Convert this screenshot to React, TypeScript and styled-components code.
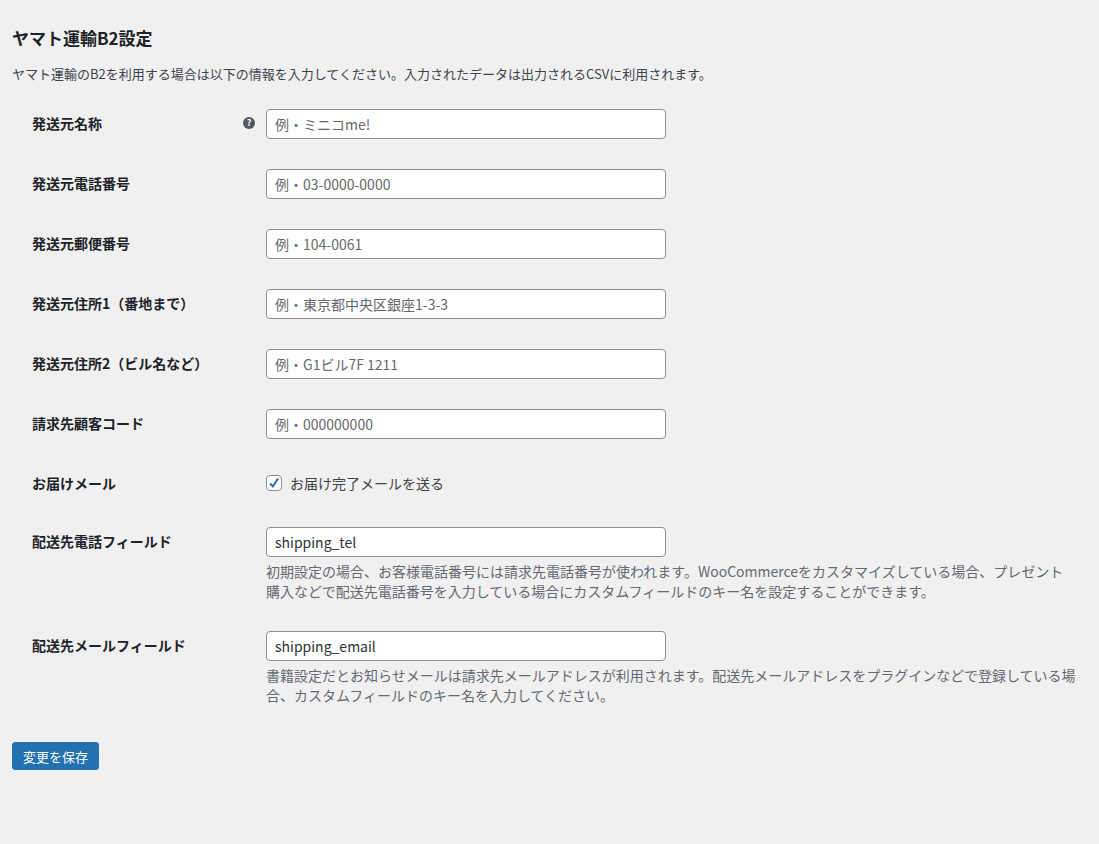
import React from "react";
import styled, { createGlobalStyle } from "styled-components";

const Global = createGlobalStyle`
  html, body { margin: 0; padding: 0; background: #f0f0f1; }
  body { font-family: "Noto Sans CJK JP", "Noto Sans", sans-serif; color: #1d2327; font-size: 13px; }
`;

const Page = styled.div`
  padding: 24px 12px 60px 12px;
  min-height: 844px;
  box-sizing: border-box;
`;
const Title = styled.h2`
  font-size: 17px; font-weight: 700; margin: 0 0 12px 0; line-height: 28px;
`;
const Intro = styled.p`
  margin: 0 0 10px 0; font-size: 13px; line-height: 20px; color: #3c434a;
`;
const Row = styled.div`
  display: flex; padding: 15px 0;
`;
const Label = styled.div`
  width: 234px; padding-left: 20px; font-size: 14px; font-weight: 700;
  line-height: 20px; padding-top: 4px; display: flex; justify-content: space-between; align-items: center; align-self: flex-start;
`;
const Help = styled.span`
  width: 12px; height: 12px; border-radius: 50%; background: #50575e; color: #fff;
  font-size: 9px; font-weight: 700; line-height: 12px; text-align: center; margin-right: 11px;
`;
const Field = styled.div`
  flex: 1; padding-right: 10px;
`;
const Input = styled.input`
  box-sizing: border-box; width: 400px; height: 30px; border: 1px solid #8c8f94; border-radius: 4px;
  background: #fff; padding: 0 8px; font-size: 14px; font-family: inherit; color: #2c3338;
  &::placeholder { color: #646970; }
`;
const Desc = styled.p`
  margin: 4px 0 0 0; font-size: 14px; line-height: 20px; color: #646970;
`;
const CheckLine = styled.label`
  display: flex; align-items: center; gap: 8px; height: 28px; font-size: 14px; color: #3c434a;
`;
const Box = styled.span`
  width: 16px; height: 16px; box-sizing: border-box; border: 1px solid #8c8f94; border-radius: 4px; background: #fff;
  display: flex; align-items: center; justify-content: center;
`;
const Button = styled.button`
  margin-top: 22px; height: 28px; padding: 0 10px; background: #2271b1; color: #fff; border: 1px solid #2271b1;
  border-radius: 3px; font-size: 13px; font-family: inherit;
`;

const fields = [
  ["発送元名称", "例・ミニコme!", true],
  ["発送元電話番号", "例・03-0000-0000"],
  ["発送元郵便番号", "例・104-0061"],
  ["発送元住所1（番地まで）", "例・東京都中央区銀座1-3-3"],
  ["発送元住所2（ビル名など）", "例・G1ビル7F 1211"],
  ["請求先顧客コード", "例・000000000"],
] as const;

export default function App() {
  return (
    <Page>
      <Global />
      <Title>ヤマト運輸B2設定</Title>
      <Intro>ヤマト運輸のB2を利用する場合は以下の情報を入力してください。入力されたデータは出力されるCSVに利用されます。</Intro>
      {fields.map((f) => (
        <Row key={f[0]}>
          <Label>{f[0]}{f[2] ? <Help>?</Help> : null}</Label>
          <Field><Input placeholder={f[1]} /></Field>
        </Row>
      ))}
      <Row>
        <Label>お届けメール</Label>
        <Field>
          <CheckLine>
            <Box>
              <svg width="14" height="14" viewBox="0 0 14 14"><path d="M3 7.5 L6 10.5 L11 2.5" stroke="#2271b1" strokeWidth="2" fill="none" /></svg>
            </Box>
            お届け完了メールを送る
          </CheckLine>
        </Field>
      </Row>
      <Row>
        <Label>配送先電話フィールド</Label>
        <Field>
          <Input defaultValue="shipping_tel" />
          <Desc>初期設定の場合、お客様電話番号には請求先電話番号が使われます。WooCommerceをカスタマイズしている場合、プレゼント購入などで配送先電話番号を入力している場合にカスタムフィールドのキー名を設定することができます。</Desc>
        </Field>
      </Row>
      <Row>
        <Label>配送先メールフィールド</Label>
        <Field>
          <Input defaultValue="shipping_email" />
          <Desc>書籍設定だとお知らせメールは請求先メールアドレスが利用されます。配送先メールアドレスをプラグインなどで登録している場合、カスタムフィールドのキー名を入力してください。</Desc>
        </Field>
      </Row>
      <Button>変更を保存</Button>
    </Page>
  );
}
